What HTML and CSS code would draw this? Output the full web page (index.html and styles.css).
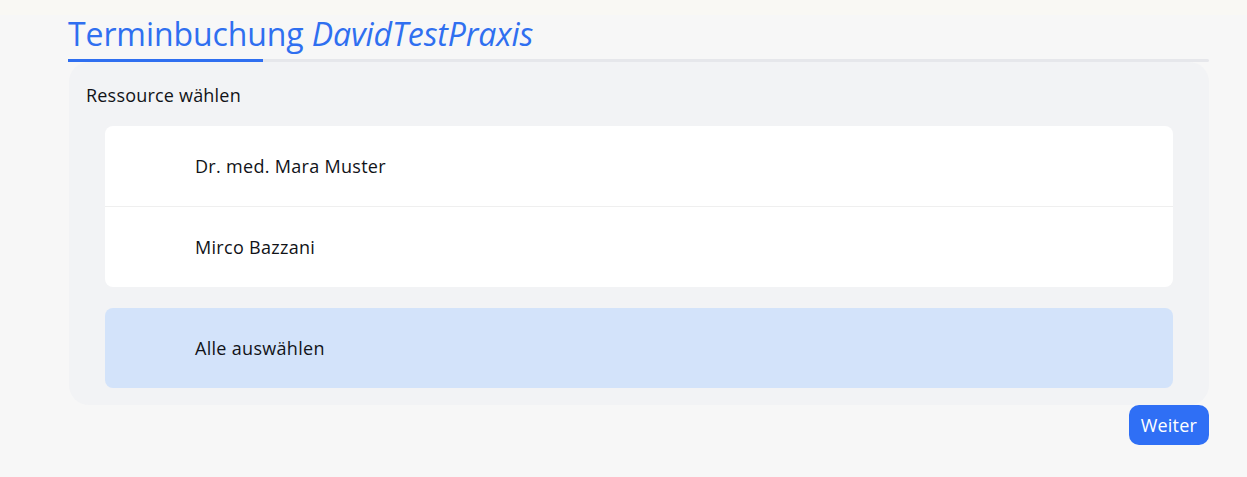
FILE: index.html
```html
<!DOCTYPE html>
<html lang="de">
<head>
<meta charset="utf-8">
<link rel="stylesheet" href="styles.css">
</head>
<body>
<main class="page">
  <h1 class="title">Terminbuchung <em>DavidTestPraxis</em></h1>
  <div class="tabline"><div class="tabline-active"></div></div>
  <section class="panel">
    <div class="panel-label">Ressource wählen</div>
    <div class="list">
      <div class="row">Dr. med. Mara Muster</div>
      <div class="row">Mirco Bazzani</div>
    </div>
    <div class="list list-all">
      <div class="row">Alle auswählen</div>
    </div>
  </section>
  <div class="actions">
    <button class="btn">Weiter</button>
  </div>
</main>
</body>
</html>
```

FILE: styles.css
```css
* { box-sizing: border-box; }
html, body { margin: 0; padding: 0; }
body {
  background: linear-gradient(#f9f8f4 0, #f9f8f4 15px, #f7f7f7 15px) no-repeat, #f7f7f7;
  font-family: "Open Sans", "Noto Sans", sans-serif;
  color: #111318;
  height: 477px;
  overflow: hidden;
}
.page {
  margin: 0 38px 0 68px;
  padding-top: 8px;
}
.title {
  margin: 0;
  font-weight: 400;
  font-size: 32px;
  letter-spacing: -0.1px;
  line-height: 51px;
  color: #2f6ff0;
  white-space: nowrap;
}
.title em { font-style: italic; }
.tabline {
  height: 3px;
  background: #e6e7eb;
  border-radius: 2px;
}
.tabline-active {
  width: 195px;
  height: 3px;
  background: #2f6ff0;
}
.panel {
  margin-left: 1px;
  background: #f2f3f5;
  border-radius: 20px;
  padding: 18px 36px 17px 36px;
}
.panel-label {
  font-size: 18px;
  letter-spacing: 0.2px;
  line-height: 30px;
  margin-left: -19px;
  margin-bottom: 16px;
}
.list {
  background: #fff;
  border-radius: 8px;
  overflow: hidden;
}
.list-all {
  background: #d3e3fa;
  margin-top: 21px;
}
.row {
  box-sizing: content-box;
  height: 80px;
  display: flex;
  align-items: center;
  padding-left: 90px;
  font-size: 18px;
  letter-spacing: 0.3px;
  border-top: 1px solid #efefef;
}
.row:first-child { border-top: none; }
.actions {
  display: flex;
  justify-content: flex-end;
}
.btn {
  border: none;
  background: #2f6ff5;
  color: #fff;
  font-family: "Open Sans", "Noto Sans", sans-serif;
  font-size: 18px;
  letter-spacing: 0.2px;
  height: 40px;
  padding: 0 12px;
  border-radius: 10px;
}
```
